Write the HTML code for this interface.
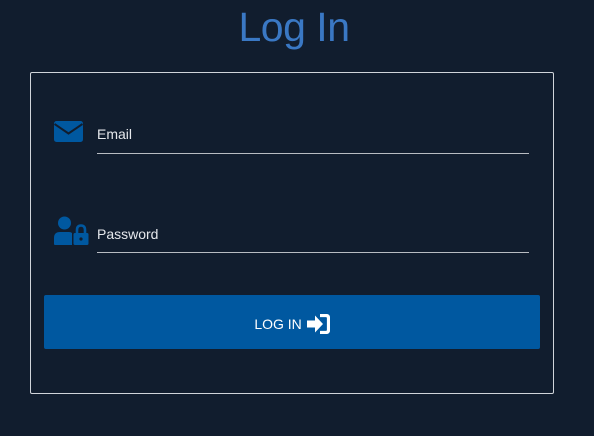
<!DOCTYPE html>
<html><head><style>
body{margin:0;width:594px;height:436px;background:#111d2e;font-family:"Liberation Sans",sans-serif;position:relative;overflow:hidden}
h1{position:absolute;left:0;width:588px;top:4px;margin:0;text-align:center;font-weight:normal;font-size:41px;color:#3a78c4;letter-spacing:-0.5px}
.box{position:absolute;left:30px;top:72px;width:522px;height:320px;border:1px solid #d0d4da;border-radius:2px}
.lbl{position:absolute;left:97px;color:#e6e8ec;font-size:14px}
.line{position:absolute;left:97px;width:432px;height:1px;background:#b8bcc2}
.btn{position:absolute;left:44px;top:297px;width:496px;height:54px;background:#0058a0;border-radius:2px;color:#fff;font-size:14px;display:flex;align-items:center;justify-content:center}
</style></head><body>
<h1>Log In</h1>
<div class="box"></div>
<svg style="position:absolute;left:54px;top:121px" width="29" height="21" viewBox="0 0 29 21"><rect x="0" y="0" width="29" height="21" rx="2.5" fill="#0058a0"/><path d="M0.5 3 L14.5 12.5 L28.5 3" fill="none" stroke="#111d2e" stroke-width="2"/></svg>
<div class="lbl" style="top:126px">Email</div>
<div class="line" style="top:153px"></div>
<svg style="position:absolute;left:54px;top:216px" width="36" height="30" viewBox="0 0 36 30"><circle cx="10.5" cy="7" r="6.5" fill="#0058a0"/><path d="M0 28 V22 Q0 16 6 16 H15 Q17 16 18 17 V29 H1 Q0 29 0 28Z" fill="#0058a0"/><path d="M23 18 V14 Q23 9.5 27 9.5 Q31 9.5 31 14 V18" fill="none" stroke="#0058a0" stroke-width="2.6"/><rect x="19.5" y="17" width="15" height="12" rx="1.5" fill="#0058a0"/><circle cx="27" cy="23" r="1.6" fill="#111d2e"/></svg>
<div class="lbl" style="top:226px">Password</div>
<div class="line" style="top:252px"></div>
<div class="btn" style="top:295px;padding-top:4px;box-sizing:border-box">LOG IN&nbsp;<svg width="24" height="20" viewBox="0 0 24 20"><path d="M1 6.5 H9 V1.5 L17 10 L9 18.5 V13.5 H1Z" fill="#fff"/><path d="M14 1.5 H20 Q22.5 1.5 22.5 4 V16 Q22.5 18.5 20 18.5 H14" fill="none" stroke="#fff" stroke-width="3.2"/></svg></div>
</body></html>
